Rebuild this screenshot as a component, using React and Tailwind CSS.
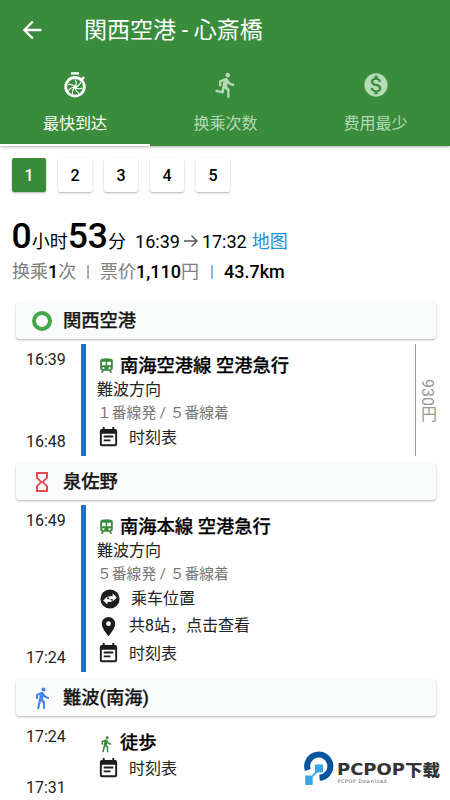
import React from "react";
import {
  MdArrowBack,
  MdDirectionsRun,
  MdMonetizationOn,
  MdDirectionsWalk,
  MdEventNote,
  MdPlace,
  MdHourglassEmpty,
} from "react-icons/md";

function Stopwatch() {
  return (
    <svg viewBox="0 0 24 26" className="-mt-px h-[26px] w-6" fill="none" stroke="white">
      <path d="M8 1.4h8" strokeWidth="2.4" />
      <path d="M18.6 7.6l2.4-2.4" strokeWidth="2.6" />
      <circle cx="12" cy="14.8" r="9.3" strokeWidth="2.8" />
      <circle cx="12" cy="14.8" r="1.5" fill="white" stroke="none" />
      <path
        d="M12 15Q14.5 11 12 7.5M12 15Q16.5 14 17.8 10.2M12 15Q15.4 18 19 16M12 15Q12.4 19.5 16 21.2M12 15Q8.8 18 9.6 22.2M12 15Q7.5 15.4 5.5 18.6M12 15Q9.5 11.5 5.2 12.6"
        strokeWidth="1.1"
      />
    </svg>
  );
}

function Train() {
  return (
    <svg viewBox="0 0 13 16" className="ml-[3px] h-4 w-[13px]">
      <path
        fillRule="evenodd"
        fill="#398c3b"
        d="M2 .8Q6.5-.2 11 .8 12.8 1.2 12.8 3v7.2Q12.8 12 11 12.4l1.2 2.4h-2l-1-2H3.8l-1 2h-2L2 12.4Q.2 12 .2 10.2V3Q.2 1.2 2 .8zM2 3.8v3.4h3.8V3.8zm5.2 0v3.4H11V3.8zM3.4 9a1.1 1.1 0 1 0 .01 0zm6.2 0a1.1 1.1 0 1 0 .01 0z"
      />
    </svg>
  );
}

function SwapCircle() {
  return (
    <svg viewBox="0 0 20 20" className="ml-[4px] h-5 w-5 shrink-0">
      <circle cx="10" cy="10" r="9.6" fill="#1c1c1c" />
      <path
        d="M8.4 7.2h4.2V4.6l4.3 4-4.3 4V10H9.6Q8.1 10 8.4 7.2zM11.6 13H7.4v2.5l-4.3-4 4.3-4v2.7h3Q12 10.2 11.6 13z"
        fill="white"
      />
    </svg>
  );
}

function Tab({ icon, label, active }) {
  return (
    <div
      className={
        active
          ? "flex h-[86px] w-[150px] flex-col items-center border-b-2 border-white pt-[10px] text-white"
          : "flex h-[86px] w-[150px] flex-col items-center border-b-2 border-transparent pt-[10px] pl-px text-[#b5dab6]"
      }
    >
      <div className="flex h-[30px] items-center">{icon}</div>
      <div className="mt-3 text-base leading-6">{label}</div>
    </div>
  );
}

function Station({ icon, name }) {
  return (
    <div className="ml-4 flex h-[37px] w-[420px] items-center rounded-[4px] bg-[#fafbfb] shadow-[0_1px_2px_rgba(0,0,0,0.3)]">
      <div className="ml-[14px] flex w-6 justify-center">{icon}</div>
      <div className="ml-[9px] text-[18.3px] leading-6 font-medium text-[#161616] [-webkit-text-stroke:0.25px]">{name}</div>
    </div>
  );
}

function Times({ from, to }) {
  return (
    <div className="flex w-[81px] shrink-0 flex-col justify-between pt-1 pb-[2px] pl-[26px] text-base leading-6 text-[#222]">
      <span>{from}</span>
      <span>{to}</span>
    </div>
  );
}

function LineName({ icon, children }) {
  return (
    <div className="flex h-[25px] items-center text-[18.3px] font-medium text-black [-webkit-text-stroke:0.25px]">
      <div className="flex w-[23px] text-[#398c3b]">{icon}</div>
      <span className="leading-[25px]">{children}</span>
    </div>
  );
}

function Action({ icon, children, wide }) {
  return (
    <div className="flex h-[27.5px] items-center text-base text-[#222]">
      <div className="flex w-[22px] justify-center">{icon}</div>
      <span className={wide ? "ml-3 leading-6" : "ml-[10px] leading-6"}>{children}</span>
    </div>
  );
}

const note = <MdEventNote className="h-[23px] w-[23px] shrink-0 text-[#1c1c1c]" />;

export default function App() {
  return (
    <div className="relative h-[800px] w-[450px] overflow-hidden bg-[#fdfefd] font-[Roboto,'Noto_Sans_CJK_SC',sans-serif] whitespace-nowrap text-black">
      <header className="h-[146px] bg-[#398c3b] text-white shadow-[0_1px_3px_rgba(0,0,0,0.3)]">
        <div className="flex h-[60px] items-center">
          <MdArrowBack className="-mt-px ml-[18px] h-7 w-7" />
          <h1 className="mt-px ml-[38px] font-[Roboto,'Noto_Sans_CJK_JP',sans-serif] text-[23px] leading-8">関西空港 - 心斎橋</h1>
        </div>
        <div className="flex">
          <Tab icon={<Stopwatch />} label="最快到达" active />
          <Tab icon={<MdDirectionsRun className="h-7 w-7" />} label="换乘次数" />
          <Tab icon={<MdMonetizationOn className="h-7 w-7" />} label="费用最少" />
        </div>
      </header>

      <div className="mt-3 ml-3 flex gap-3 text-base font-medium">
        <div className="flex h-[34px] w-[34px] items-center justify-center rounded-[2px] bg-[#398c3b] pt-px text-white shadow-[0_1px_2px_rgba(0,0,0,0.3)]">1</div>
        {[2, 3, 4, 5].map((n) => (
          <div key={n} className="flex h-[34px] w-[34px] items-center justify-center rounded-[2px] bg-white pt-px shadow-[0_1px_2px_rgba(0,0,0,0.3)]">
            {n}
          </div>
        ))}
      </div>

      <div className="mt-6 flex h-10 items-baseline pl-[11.5px] text-[18px] leading-10">
        <span className="text-[35.5px] font-medium">0</span>
        <span>小时</span>
        <span className="text-[35.5px] font-medium">53</span>
        <span>分</span>
        <span className="ml-[9px]">16:39</span>
        <svg viewBox="0 0 16 14" className="mx-[3px] h-[14px] w-4" fill="none" stroke="#555" strokeWidth="1.4">
          <path d="M1 7h13M8.5 1.5L14 7l-5.5 5.5" />
        </svg>
        <span>17:32</span>
        <span className="ml-[5px] text-[#2b8fd6]">地图</span>
      </div>
      <div className="mt-[2px] flex h-7 items-center pl-3 text-[18px] leading-7 text-[#808080]">
        <span className="w-[76px]">
          换乘<b className="font-medium text-black">1</b>次
        </span>
        <span className="w-3 -translate-x-[2px] text-base">|</span>
        <span className="w-[112px]">
          票价<b className="font-medium text-black">1,110</b>円
        </span>
        <span className="w-3 -translate-x-[2px] text-base">|</span>
        <b className="font-medium text-black">43.7km</b>
      </div>

      <main className="mt-4 font-[Roboto,'Noto_Sans_CJK_JP',sans-serif]">
        <Station icon={<div className="h-5 w-5 rounded-full border-4 border-[#43a747]" />} name="関西空港" />
        <section className="mt-[5px] flex h-[112px]">
          <Times from="16:39" to="16:48" />
          <div className="w-[5px] bg-[#0d78d8]" />
          <div className="ml-[11px] w-[318px] pt-[9px]">
            <LineName icon={<Train />}>南海空港線 空港急行</LineName>
            <div className="text-base leading-6 text-[#222]">難波方向</div>
            <div className="text-[14.8px] leading-[22px] text-[#777]">１番線発 / ５番線着</div>
            <Action icon={note}>时刻表</Action>
          </div>
          <div className="flex items-center border-l border-[#999] text-base leading-6 text-[#999]">
            <span className="-ml-px [writing-mode:vertical-rl]">930円</span>
          </div>
        </section>

        <div className="h-[7px]" />
        <Station icon={<MdHourglassEmpty className="h-6 w-6 text-[#e9494e]" />} name="泉佐野" />
        <section className="mt-[5px] flex h-[167px]">
          <Times from="16:49" to="17:24" />
          <div className="w-[5px] bg-[#0d78d8]" />
          <div className="ml-[11px] pt-[9px]">
            <LineName icon={<Train />}>南海本線 空港急行</LineName>
            <div className="text-base leading-6 text-[#222]">難波方向</div>
            <div className="text-[14.8px] leading-[22px] text-[#777]">５番線発 / ５番線着</div>
            <Action icon={<SwapCircle />} wide>乘车位置</Action>
            <Action icon={<MdPlace className="h-[23px] w-[23px] shrink-0 text-[#1c1c1c]" />}>共8站，点击查看</Action>
            <Action icon={note}>时刻表</Action>
          </div>
        </section>

        <div className="h-[7px]" />
        <Station icon={<MdDirectionsWalk className="h-6 w-6 text-[#4285f4]" />} name="難波(南海)" />
        <section className="mt-[5px] flex h-[81px]">
          <Times from="17:24" to="17:31" />
          <div className="ml-4 pt-[9px]">
            <LineName icon={<MdDirectionsWalk className="h-[18px] w-[18px] translate-y-px" />}>徒歩</LineName>
            <Action icon={note}>时刻表</Action>
          </div>
        </section>
      </main>

      <svg viewBox="0 0 138 36" className="absolute top-[751px] left-[304px] h-9 w-[138px]">
        <path d="M3.8 19A11.6 11.6 0 1 1 15.5 26.8" fill="none" stroke="#0b559f" strokeWidth="6" />
        <path d="M11 13.5h8v8h-5.5l-4.8 4.5v8H1.2V24.5h6.8l3-3.5z" fill="#3da5e4" />
        <text x="33" y="23.5" textLength="68" lengthAdjust="spacingAndGlyphs" fontFamily="DejaVu Sans" fontWeight="700" fontSize="15.5" fill="#333">PCPOP</text>
        <text x="101" y="24.5" textLength="35" lengthAdjust="spacingAndGlyphs" fontFamily="Noto Sans CJK SC" fontWeight="900" fontSize="16" fill="#333">下载</text>
        <text x="33.5" y="31.5" textLength="49" fontFamily="DejaVu Sans" fontSize="4.8" fill="#555">PCPOP Download</text>
      </svg>
    </div>
  );
}
